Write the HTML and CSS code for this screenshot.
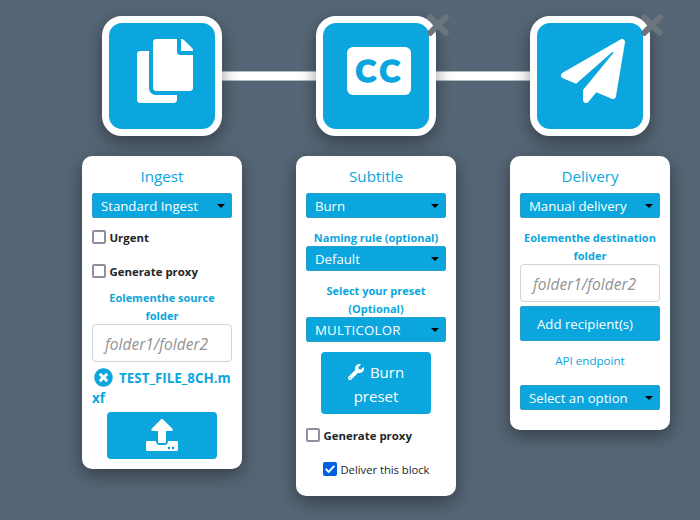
FILE: index.html
```
<!DOCTYPE html>
<html lang="en">
<head>
<meta charset="utf-8">
<title>Workflow</title>
<link rel="stylesheet" href="styles.css">
</head>
<body>
<main class="flow">
  <section class="step">
    <div class="tile">
      <svg class="icon copy" viewBox="0 0 448 512"><path d="M320 448v40c0 13.255-10.745 24-24 24H24c-13.255 0-24-10.745-24-24V120c0-13.255 10.745-24 24-24h72v296c0 30.879 25.121 56 56 56h168zm0-344V0H152c-13.255 0-24 10.745-24 24v368c0 13.255 10.745 24 24 24h272c13.255 0 24-10.745 24-24V128H344c-13.2 0-24-10.8-24-24zm120.971-31.029L375.029 7.029A24 24 0 0 0 358.059 0H352v96h96v-6.059a24 24 0 0 0-7.029-16.97z"/></svg>
    </div>
    <div class="card ingest">
      <h2 class="title">Ingest</h2>
      <div class="select"><span>Standard Ingest</span></div>
      <label class="check urgent"><span class="box"></span><span class="caption">Urgent</span></label>
      <label class="check proxy"><span class="box"></span><span class="caption">Generate proxy</span></label>
      <p class="label source">Eolementhe source<br>folder</p>
      <div class="input"><span>folder1/folder2</span></div>
      <p class="file"><svg class="remove" viewBox="0 0 512 512"><path d="M256 8C119 8 8 119 8 256s111 248 248 248 248-111 248-248S393 8 256 8zm121.6 313.1c4.7 4.7 4.7 12.3 0 17L338 377.6c-4.7 4.7-12.3 4.7-17 0L256 312l-65.1 65.6c-4.7 4.7-12.3 4.7-17 0L134.4 338c-4.7-4.7-4.7-12.3 0-17l65.6-65-65.6-65.1c-4.7-4.7-4.7-12.3 0-17l39.6-39.6c4.7-4.7 12.3-4.7 17 0l65 65.7 65.1-65.6c4.7-4.7 12.3-4.7 17 0l39.6 39.6c4.7 4.7 4.7 12.3 0 17L312 256l65.6 65.1z"/></svg>TEST_FILE_8CH.m<br>xf</p>
      <div class="button upload"><svg viewBox="0 0 512 512"><path d="M296 384h-80c-13.3 0-24-10.7-24-24V192h-87.7c-17.8 0-26.7-21.5-14.1-34.1L242.3 5.7c7.5-7.5 19.8-7.5 27.3 0l152.2 152.2c12.6 12.6 3.7 34.1-14.1 34.1H320v168c0 13.3-10.7 24-24 24zm216-8v112c0 13.3-10.7 24-24 24H24c-13.3 0-24-10.7-24-24V376c0-13.3 10.7-24 24-24h136v8c0 30.9 25.1 56 56 56h80c30.9 0 56-25.1 56-56v-8h136c13.3 0 24 10.7 24 24zm-124 88c0-11-9-20-20-20s-20 9-20 20 9 20 20 20 20-9 20-20zm64 0c0-11-9-20-20-20s-20 9-20 20 9 20 20 20 20-9 20-20z"/></svg></div>
    </div>
  </section>

  <section class="step linked">
    <div class="tile">
      <svg class="icon" viewBox="0 0 64 64"><rect y="8" width="64" height="48" rx="6"/><text class="cc" y="43.2"><tspan x="8.5">C</tspan><tspan x="32.5">C</tspan></text></svg>
      <svg class="close" viewBox="0 0 352 512"><path d="M242.72 256l100.07-100.07c12.28-12.28 12.28-32.19 0-44.48l-22.24-22.24c-12.28-12.28-32.19-12.28-44.48 0L176 189.28 75.93 89.21c-12.28-12.28-32.19-12.28-44.48 0L9.21 111.45c-12.28 12.28-12.28 32.19 0 44.48L109.28 256 9.21 356.07c-12.28 12.28-12.28 32.19 0 44.48l22.24 22.24c12.28 12.28 32.2 12.28 44.48 0L176 322.72l100.07 100.07c12.28 12.28 32.2 12.28 44.48 0l22.24-22.24c12.28-12.28 12.28-32.19 0-44.48L242.72 256z"/></svg>
    </div>
    <div class="card subtitle">
      <h2 class="title">Subtitle</h2>
      <div class="select"><span>Burn</span></div>
      <p class="label">Naming rule (optional)</p>
      <div class="select"><span>Default</span></div>
      <p class="label">Select your preset<br>(Optional)</p>
      <div class="select"><span class="wide">MULTICOLOR</span></div>
      <div class="button burn"><svg viewBox="0 0 512 512"><path d="M507.73 109.1c-2.24-9.03-13.54-12.09-20.12-5.51l-74.36 74.36-67.88-11.31-11.31-67.88 74.36-74.36c6.62-6.62 3.43-17.9-5.66-20.16-47.38-11.74-99.55.91-136.58 37.93-39.64 39.64-50.55 97.1-34.05 147.2L18.74 402.76c-24.99 24.99-24.99 65.51 0 90.5 24.99 24.99 65.51 24.99 90.5 0l213.21-213.21c50.12 16.71 107.47 5.68 147.37-34.22 37.07-37.07 49.7-89.32 37.91-136.73zM64 472c-13.25 0-24-10.75-24-24 0-13.26 10.75-24 24-24s24 10.74 24 24c0 13.25-10.75 24-24 24z"/></svg>Burn<br>preset</div>
      <label class="check proxy"><span class="box"></span><span class="caption">Generate proxy</span></label>
      <label class="check deliver"><span class="box on"><svg viewBox="0 0 14 14"><path d="M3.2 7.4l2.5 2.5 5.2-5.5"/></svg></span><span class="caption">Deliver this block</span></label>
    </div>
  </section>

  <section class="step linked">
    <div class="tile">
      <svg class="icon" viewBox="0 0 512 512"><path d="M476 3.2L12.5 270.6c-18.1 10.4-15.8 35.6 2.2 43.2L121 358.4l287.3-253.2c5.5-4.9 13.3 2.6 8.6 8.3L176 407v80.5c0 23.6 28.5 32.9 42.5 15.8L282 426l124.6 52.2c14.2 6 30.4-2.9 33-18.2l72-432C515 7.8 493.3-6.8 476 3.2z"/></svg>
      <svg class="close" viewBox="0 0 352 512"><path d="M242.72 256l100.07-100.07c12.28-12.28 12.28-32.19 0-44.48l-22.24-22.24c-12.28-12.28-32.19-12.28-44.48 0L176 189.28 75.93 89.21c-12.28-12.28-32.19-12.28-44.48 0L9.21 111.45c-12.28 12.28-12.28 32.19 0 44.48L109.28 256 9.21 356.07c-12.28 12.28-12.28 32.19 0 44.48l22.24 22.24c12.28 12.28 32.2 12.28 44.48 0L176 322.72l100.07 100.07c12.28 12.28 32.2 12.28 44.48 0l22.24-22.24c12.28-12.28 12.28-32.19 0-44.48L242.72 256z"/></svg>
    </div>
    <div class="card delivery">
      <h2 class="title">Delivery</h2>
      <div class="select"><span>Manual delivery</span></div>
      <p class="label">Eolementhe destination<br>folder</p>
      <div class="input"><span>folder1/folder2</span></div>
      <div class="recipients"><span>Add recipient(s)</span></div>
      <p class="api">API endpoint</p>
      <div class="select"><span>Select an option</span></div>
    </div>
  </section>
</main>
</body>
</html>
```
FILE: styles.css
```
*, *::before, *::after { box-sizing: border-box; }

body {
  margin: 0;
  height: 520px;
  overflow: hidden;
  background: #566676;
  font-family: "Open Sans", "Noto Sans", sans-serif;
  color: #212529;
}

h2, p { margin: 0; font-weight: 400; }
svg { display: block; }

.flow {
  display: flex;
  align-items: flex-start;
  gap: 54px;
  padding: 16px 0 0 82px;
}

.step {
  position: relative;
  width: 160px;
  display: flex;
  flex-direction: column;
  align-items: center;
  gap: 20px;
}

/* Connector to the previous step, under the tile shadows */
.linked::before {
  content: "";
  position: absolute;
  z-index: -1;
  left: -75px;
  top: 55px;
  width: 96px;
  height: 10px;
  background: #fff;
  border: solid #b4bbc1;
  border-width: 1px 0;
}

.tile {
  position: relative;
  width: 120px;
  height: 120px;
  padding: 16px 0 0 24px;
  border: 7px solid #fff;
  border-radius: 20px;
  background: #0aa6dd;
  box-shadow: 0 6px 18px rgba(0, 0, 0, .4);
}

.icon { width: 64px; height: 64px; fill: #fff; }
.copy { width: 56px; margin-left: 4px; }
.cc {
  font: 900 31px Lato, sans-serif;
  fill: #0aa6dd;
  stroke: #0aa6dd;
  stroke-width: 1.5px;
}

.close {
  position: absolute;
  top: -14px;
  right: -19.5px;
  width: 22px;
  height: 32px;
  fill: #6c757d;
}

.card {
  width: 160px;
  padding: 8px 10px 0;
  border-radius: 10px;
  background: #fff;
  box-shadow: 0 6px 18px rgba(0, 0, 0, .4);
}
.ingest { height: 313px; }
.subtitle { height: 340px; }
.delivery { height: 274px; }

.title {
  height: 29px;
  font-size: 15.2px;
  line-height: 24px;
  text-align: center;
  color: #0aa6dd;
}

.select {
  display: flex;
  align-items: center;
  justify-content: space-between;
  height: 25px;
  padding: 0 6px 0 8px;
  border: 1px solid #2a9fc9;
  border-radius: 2px;
  background: #0aa6dd;
  color: #fff;
  font-size: 13.2px;
  line-height: 20px;
  white-space: nowrap;
}
.select::after {
  content: "";
  border: solid transparent;
  border-width: 4px 4.5px 0;
  border-top-color: #000;
}
.wide { letter-spacing: .25px; }

.label {
  margin-bottom: -1px;
  padding-top: 11px;
  font-size: 11px;
  font-weight: 700;
  line-height: 18px;
  text-align: center;
  white-space: nowrap;
  color: #0aa6dd;
}

.check {
  display: flex;
  align-items: center;
  gap: 3.5px;
  height: 18px;
  font-size: 11.4px;
  font-weight: 700;
  line-height: 18px;
  white-space: nowrap;
}
.caption { padding-top: 2px; }
.box {
  width: 14px;
  height: 14px;
  border: 2px solid #8f8f9d;
  border-radius: 2px;
}
.box.on { border: 0; background: #0060df; }
.box path { fill: none; stroke: #fff; stroke-width: 2; stroke-linecap: round; stroke-linejoin: round; }
.urgent { margin-top: 10px; }
.ingest .proxy { margin-top: 16px; }
.source { padding-top: 9px; }

.input {
  display: flex;
  align-items: center;
  height: 38px;
  padding: 1px 0 0 12px;
  border: 1px solid #ced4da;
  border-radius: 4px;
  font-size: 15.5px;
  font-style: italic;
  color: #939393;
}

.file {
  margin-top: 6px;
  font-size: 13.4px;
  font-weight: 700;
  line-height: 20px;
  white-space: nowrap;
  color: #0aa6dd;
}
.remove {
  display: inline-block;
  width: 19px;
  height: 19px;
  margin: 0 6px 0 2px;
  vertical-align: -4px;
  fill: currentColor;
}

.button {
  width: 110px;
  border-radius: 4px;
  background: #0aa6dd;
  color: #fff;
  font-size: 15px;
  line-height: 24px;
  text-align: center;
}
.upload { height: 47px; margin: 4px 0 0 15px; padding: 7px 0 0 39px; }
.upload svg { width: 32px; height: 32px; fill: #fff; }
.burn { height: 62px; margin: 10px 0 0 15px; padding-top: 8px; }
.burn svg { display: inline-block; width: 16px; height: 16px; margin-right: 6px; vertical-align: -2px; fill: #fff; }
.subtitle .proxy { margin-top: 12px; }
.deliver { margin: 16px 0 0 17px; font-size: 11.2px; font-weight: 400; }

.recipients {
  height: 35px;
  margin-top: 4px;
  padding-left: 16px;
  border: 1px solid #2a9fc9;
  border-radius: 2px;
  background: #0aa6dd;
  color: #fff;
  font-size: 13.2px;
  line-height: 34px;
}
.api {
  height: 44px;
  padding-top: 11px;
  font-size: 11.6px;
  line-height: 18px;
  text-align: center;
  color: #0aa6dd;
}
```
